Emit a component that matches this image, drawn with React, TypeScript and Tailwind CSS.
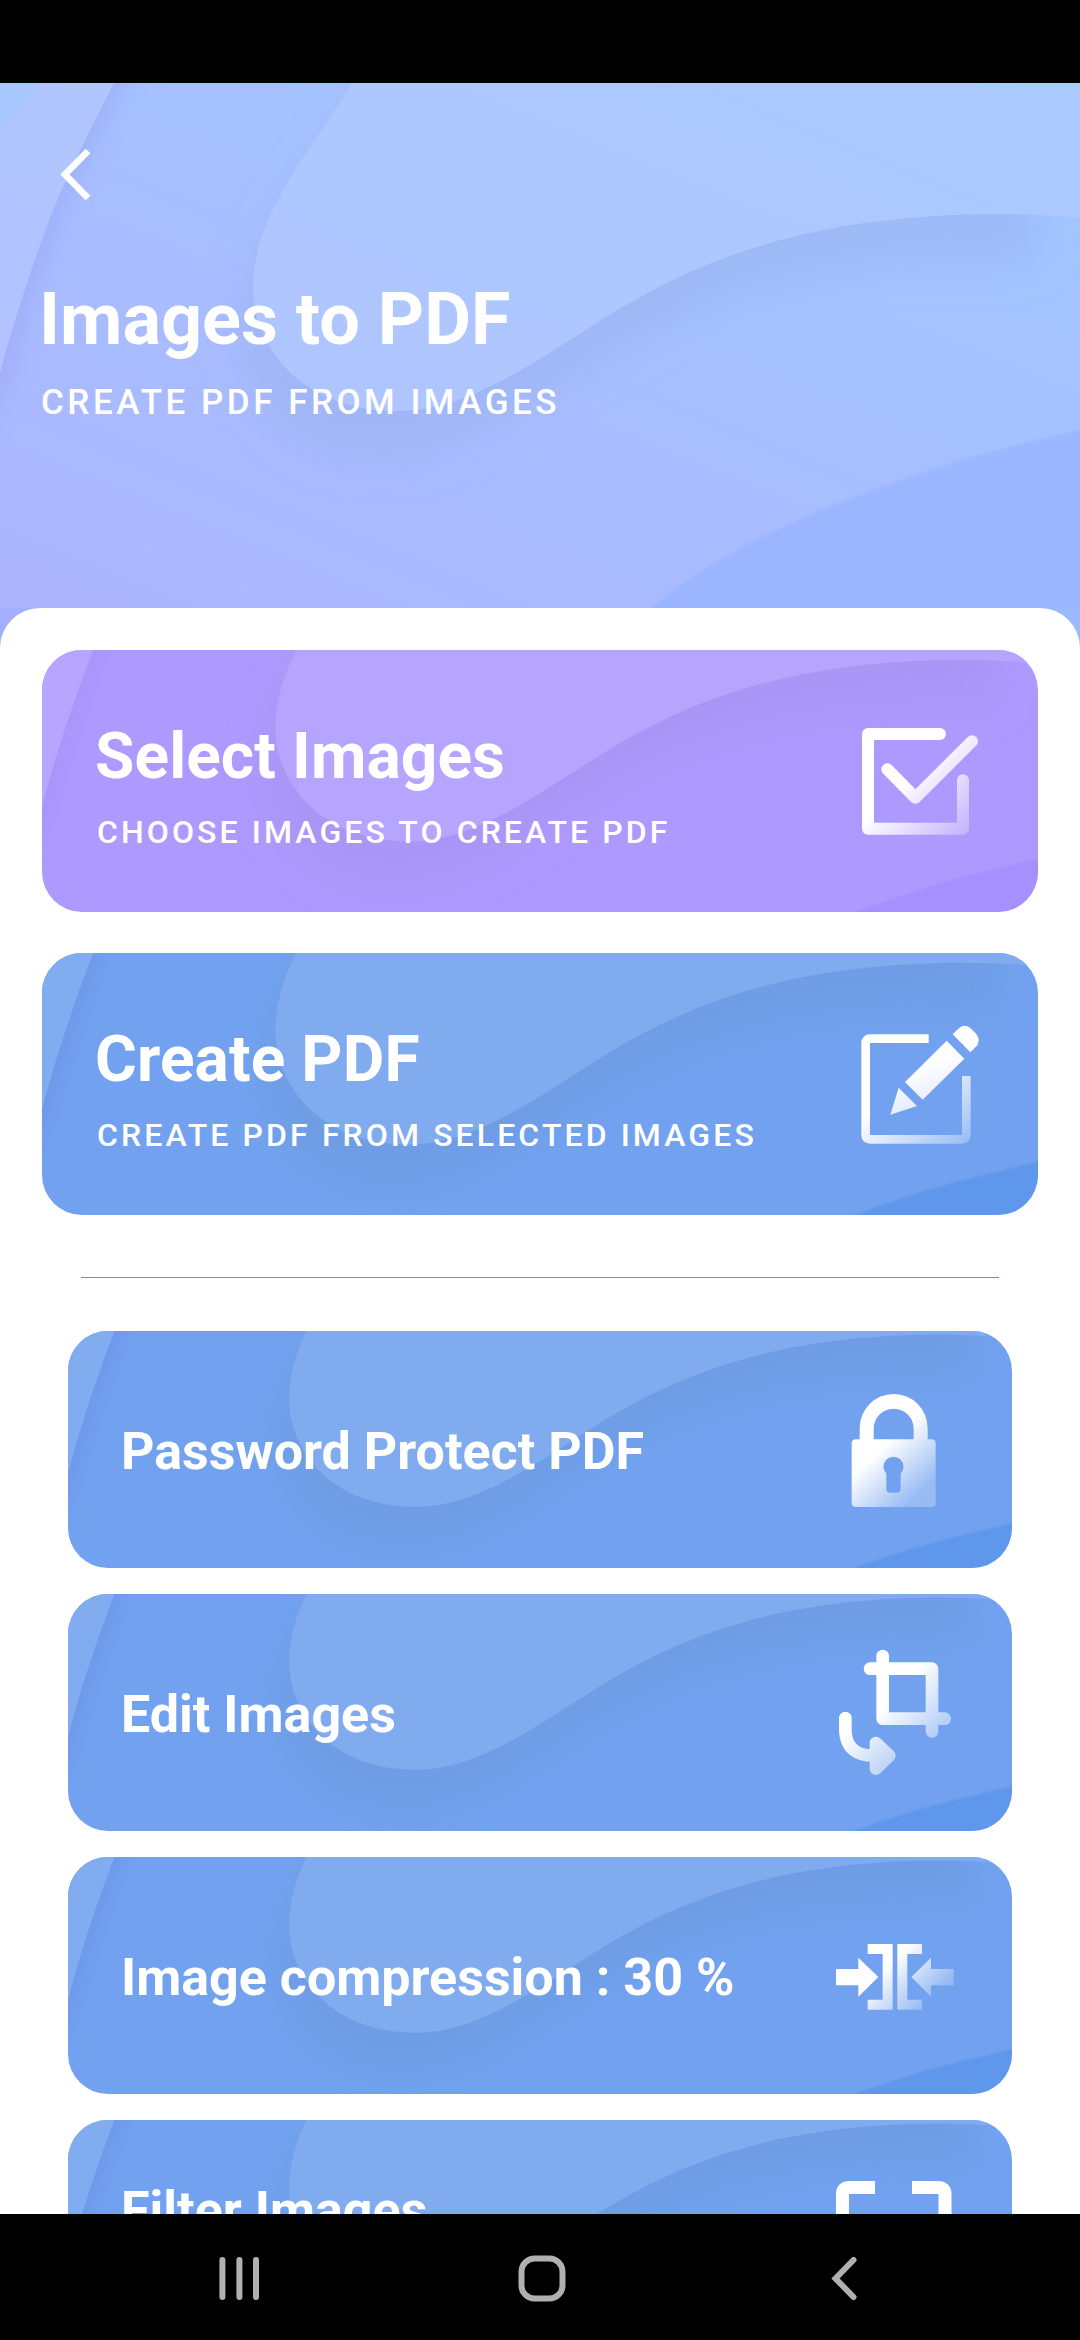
import type { ReactNode } from "react";

type Palette = {
  id: string;
  from: string;
  to: string;
  light: string;
  band: string;
  shadow: string;
  shadowOpacity: number;
  bandShadow: string;
  corner: string;
};

const header: Palette = { id: "h", from: "#adb5ff", to: "#a0c8ff", light: "#b7cdff", band: "#bccbff", shadow: "#94aeea", shadowOpacity: 0.42, bandShadow: "#8f9cf0", corner: "#92b0ff" };
const purple: Palette = { id: "p", from: "#ae9afe", to: "#ae9afe", light: "#bcb0ff", band: "#bdb2ff", shadow: "#a592ee", shadowOpacity: 0.5, bandShadow: "#a08eec", corner: "#9f89ff" };
const blue: Palette = { id: "b", from: "#72a2ef", to: "#72a2ef", light: "#8eb4ef", band: "#90b6ef", shadow: "#6c9ae0", shadowOpacity: 0.6, bandShadow: "#6a86e4", corner: "#5490ea" };

const BLOB =
  "M420 -80Q380 -46 352 0C310 70 253 130 253 205C253 262 300 328 398 328C470 328 540 275 606 234C690 182 800 131 1000 131Q1040 131 1090 136V-80Z";
const BLOB_SHADOW =
  "M420 -80Q380 -46 352 0C310 70 253 130 253 205C253 262 300 328 398 328C470 328 540 275 606 234C690 182 800 131 1000 131L1050 132V-80Z";
const BAND = "M-60 -80H145Q128 -44 114 0C92 44 70 85 52 130C36 172 14 235 0 291L-20 340H-60Z";

function Waves({ p, className }: { p: Palette; className: string }) {
  return (
    <svg className={className} viewBox="0 0 1080 525" preserveAspectRatio="xMidYMid slice" aria-hidden="true">
      <defs>
        <linearGradient id={p.id + "bg"} gradientUnits="userSpaceOnUse" x1="0" y1="525" x2="340" y2="-297">
          <stop offset="0" stopColor={p.from} />
          <stop offset="1" stopColor={p.to} />
        </linearGradient>
        <filter id={p.id + "s"} x="-20%" y="-20%" width="140%" height="150%">
          <feGaussianBlur stdDeviation="20" />
        </filter>
        <filter id={p.id + "t"} x="-50%" y="-20%" width="200%" height="140%">
          <feGaussianBlur stdDeviation="10" />
        </filter>
        <filter id={p.id + "e"}>
          <feGaussianBlur stdDeviation="1.4" />
        </filter>
      </defs>
      <rect x="0" y="-10" width="1080" height="545" fill={`url(#${p.id}bg)`} />
      <path d={BAND} fill={p.bandShadow} fillOpacity="0.34" filter={`url(#${p.id}t)`} transform="translate(12 2)" />
      <path d={BAND} fill={`url(#${p.id}bg)`} />
      <path d={BAND} fill={p.band} fillOpacity="0.5" />
      <path d="M-60 -80H80Q60 -44 41 0Q22 26 0 50L-60 150Z" fill={p.to} fillOpacity="0.5" filter={`url(#${p.id}e)`} />
      <path d={BLOB_SHADOW} fill={p.shadow} fillOpacity={p.shadowOpacity} filter={`url(#${p.id}s)`} transform="translate(-14 48)" />
      <path d={BLOB} fill={`url(#${p.id}bg)`} />
      <path d={BLOB} fill={p.light} fillOpacity="0.52" />
      <path d="M620 560L651 525C730 460 820 426 902 397S1010 364 1090 344V560Z" fill={p.corner} fillOpacity="0.6" filter={`url(#${p.id}e)`} />
    </svg>
  );
}

function Fade({ id, x1, y1, x2, y2, end }: { id: string; x1: number; y1: number; x2: number; y2: number; end: number }) {
  return (
    <linearGradient id={id} gradientUnits="userSpaceOnUse" x1={x1} y1={y1} x2={x2} y2={y2}>
      <stop offset="0" stopColor="#fff" />
      <stop offset="1" stopColor="#fff" stopOpacity={end} />
    </linearGradient>
  );
}

function CheckIcon() {
  return (
    <svg className="mt-[50px] mr-[38px] size-40 shrink-0" viewBox="0 0 480 480" fill="none">
      <Fade id="ck" x1={205} y1={235} x2={375} y2={405} end={0.25} />
      <g stroke="url(#ck)" strokeWidth="36" strokeLinecap="round" strokeLinejoin="round">
        <path d="M300 102H84V386H369V241" />
        <path d="M142 208L226 293L396 124" />
      </g>
    </svg>
  );
}

function PencilIcon() {
  return (
    <svg className="mt-[47px] mr-[38px] size-40 shrink-0" viewBox="0 0 480 480" fill="none">
      <Fade id="pn" x1={215} y1={230} x2={380} y2={425} end={0.3} />
      <Fade id="pp" x1={230} y1={210} x2={330} y2={450} end={0.5} />
      <path d="M266 116H90Q77 116 77 129V405Q77 418 90 418H366Q379 418 379 405V228" stroke="url(#pn)" strokeWidth="26" />
      <path d="M320 122L373 176L248 299L195 246ZM176 263L231 318L151 344ZM338 103L355 86Q372 70 391 84L408 101Q422 118 411 137L391 157Z" fill="url(#pp)" />
    </svg>
  );
}

function LockIcon() {
  return (
    <svg className="mt-[39px] mr-[42px] size-[150px] shrink-0" viewBox="0 0 450 450" fill="none">
      <Fade id="lk" x1={180} y1={240} x2={300} y2={370} end={0.27} />
      <path
        fill="url(#lk)"
        fillRule="evenodd"
        d="M119 208V174A102 102 0 0 1 323 174V208H334Q347 208 347 221V398Q347 411 334 411H108Q95 411 95 398V221Q95 208 108 208ZM161 208H281V176A60 60 0 0 0 161 176ZM199 311V356Q199 368 211 368H230Q242 368 242 356V311A30 30 0 1 0 199 311Z"
      />
    </svg>
  );
}

function CropIcon() {
  return (
    <svg className="mt-[36px] mr-[42px] h-40 w-[150px] shrink-0" viewBox="0 0 450 480" fill="none">
      <Fade id="cr" x1={220} y1={200} x2={340} y2={310} end={0.5} />
      <Fade id="ar" x1={80} y1={310} x2={200} y2={430} end={0.5} />
      <path
        d="M188 78V266H374M150 116H336V304"
        stroke="url(#cr)"
        strokeWidth="38"
        strokeLinecap="round"
        strokeLinejoin="round"
      />
      <path
        d="M76 264V304Q80 374 156 377M168 339L208 377L168 416Z"
        stroke="url(#ar)"
        strokeWidth="38"
        strokeLinecap="round"
        strokeLinejoin="round"
      />
    </svg>
  );
}

function CompressIcon() {
  return (
    <svg className="mt-[63px] mr-[42px] h-[110px] w-[150px] shrink-0" viewBox="0 0 450 330" fill="none">
      <Fade id="cp" x1={205} y1={135} x2={320} y2={250} end={0.25} />
      <path
        fill="url(#cp)"
        d="M48 147H115V113L175 171L115 230V196H48ZM143 72H218V269H143V239H188V102H143ZM306 72H232V269H306V239H262V102H306ZM401 147H333V113L274 171L333 230V196H401Z"
      />
    </svg>
  );
}

function FrameIcon() {
  return (
    <svg className="mt-[60px] mr-[60px] size-[117px] shrink-0" viewBox="0 0 117 117" fill="none" stroke="#fff" strokeWidth="13">
      <path d="M40 7.5H14Q7.5 7.5 7.5 14V40M77 7.5H103Q110 7.5 110 14V40M7.5 77V103Q7.5 110 14 110H40M110 77V103Q110 110 103 110H77" />
    </svg>
  );
}

function BigCard({ p, title, sub, icon }: { p: Palette; title: string; sub: string; icon: ReactNode }) {
  return (
    <button className="relative flex h-[262px] w-full items-start justify-between overflow-hidden rounded-[40px] text-left">
      <Waves p={p} className="absolute inset-0 size-full" />
      <div className="relative pt-[67px] pl-[53px] whitespace-nowrap">
        <div className="text-[64px] leading-[80px] font-bold tracking-[0.1px]">{title}</div>
        <div className="mt-[15px] pl-[2px] text-[32px] leading-[40px] font-medium tracking-[3.1px]">{sub}</div>
      </div>
      <div className="relative">{icon}</div>
    </button>
  );
}

function SmallCard({ title, icon, top = "pt-[89px]" }: { title: string; icon: ReactNode; top?: string }) {
  return (
    <button className="relative flex h-[237px] w-full shrink-0 items-start justify-between overflow-hidden rounded-[40px] text-left">
      <Waves p={blue} className="absolute inset-0 size-full" />
      <div className={"relative pl-[53px] text-[52px] leading-[64px] font-bold whitespace-nowrap " + top}>{title}</div>
      <div className="relative">{icon}</div>
    </button>
  );
}

export default function App() {
  return (
    <div className="flex h-[2340px] w-[1080px] flex-col overflow-hidden bg-black font-[Roboto,sans-serif] text-white">
      <div className="h-[83px] shrink-0" />
      <div className="flex min-h-0 flex-1 flex-col bg-linear-to-r from-[#a3aeff] to-[#9ab9ff]">
        <header className="relative h-[525px] shrink-0 overflow-hidden">
          <Waves p={header} className="absolute inset-0 size-full" />
          <div className="relative flex flex-col items-start pl-[39px]">
            <svg className="mt-[66px] ml-[21px] h-[51px] w-8" viewBox="0 0 32 51" fill="none" stroke="#fff" strokeWidth="6.6">
              <path d="M28 2L5 25.5L28 49" />
            </svg>
            <h1 className="mt-[75px] text-[72px] leading-[90px] font-bold whitespace-nowrap">Images to PDF</h1>
            <p className="mt-[17px] pl-[2px] text-[35px] leading-[42px] font-medium tracking-[3.5px] whitespace-nowrap">CREATE PDF FROM IMAGES</p>
          </div>
        </header>
        <main className="flex min-h-0 flex-1 flex-col overflow-hidden rounded-t-[40px] bg-white px-[42px] pt-[42px]">
          <div className="flex shrink-0 flex-col gap-[41px]">
            <BigCard p={purple} title="Select Images" sub="CHOOSE IMAGES TO CREATE PDF" icon={<CheckIcon />} />
            <BigCard p={blue} title="Create PDF" sub="CREATE PDF FROM SELECTED IMAGES" icon={<PencilIcon />} />
          </div>
          <div className="mx-[39px] mt-[62px] h-px shrink-0 bg-[#6495c4]" />
          <div className="mt-[53px] flex flex-col gap-[26px] px-[26px]">
            <SmallCard title="Password Protect PDF" icon={<LockIcon />} />
            <SmallCard title="Edit Images" icon={<CropIcon />} />
            <SmallCard title="Image compression : 30 %" icon={<CompressIcon />} />
            <SmallCard title="Filter Images" top="pt-[59px]" icon={<FrameIcon />} />
          </div>
        </main>
      </div>
      <nav className="flex h-[126px] shrink-0 items-start bg-black pt-[41px] pl-[219px] text-[#b0b0b0]">
        <svg className="mt-[2px] h-[43px] w-10" viewBox="0 0 40 43" stroke="currentColor" strokeWidth="6" strokeLinecap="round">
          <path d="M3.4 3V40M20.4 3V40M37 3V40" />
        </svg>
        <svg className="ml-[259px] h-[47px] w-[48px]" viewBox="0 0 48 47" fill="none" stroke="currentColor" strokeWidth="6">
          <rect x="3.5" y="3.5" width="41" height="40" rx="13" />
        </svg>
        <svg className="mt-[2px] ml-[264px] h-[43px] w-7" viewBox="0 0 28 43" fill="none" stroke="currentColor" strokeWidth="6" strokeLinecap="round">
          <path d="M23.5 3L5.5 21.5L23.5 40" />
        </svg>
      </nav>
    </div>
  );
}
